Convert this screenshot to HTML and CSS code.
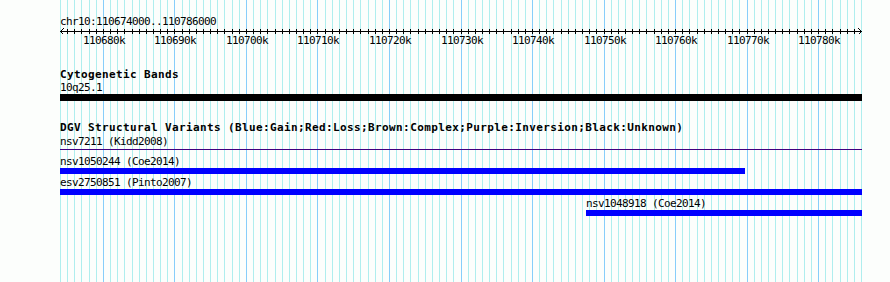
FILE: index.html
```html
<!DOCTYPE html>
<html lang="en">
  <head>
    <meta charset="UTF-8" />
    <meta name="viewport" content="width=device-width, initial-scale=1.0" />
    <title>chr10:110674000..110786000</title>
    <link rel="stylesheet" href="styles.css">
  </head>
  <body>
    <div class="panel">
      <svg class="grid" id="grid" width="890" height="282"></svg>

      <div class="ruler">
        <div class="ruler-title">chr10:110674000..110786000</div>
        <svg class="axis" id="axis" width="890" height="18"></svg>
      </div>

      <div class="track cyto-track">
        <div class="track-title">Cytogenetic Bands</div>
        <div class="lane" id="cytoLane"></div>
      </div>

      <div class="track dgv-track">
        <div class="track-title">DGV Structural Variants (Blue:Gain;Red:Loss;Brown:Complex;Purple:Inversion;Black:Unknown)</div>
        <div class="lane" id="dgvLane"></div>
      </div>
    </div>

    <script>
      const START = 110674000;
      const END = 110786000;
      const LEFT = 60;
      const SPAN = 801;
      const SVG_NS = "http://www.w3.org/2000/svg";

      const bands = [{ name: "10q25.1", start: 110600000, end: 110900000, type: "band" }];

      const variants = [
        { name: "nsv7211 (Kidd2008)", start: 110600000, end: 110900000, type: "inversion" },
        { name: "nsv1050244 (Coe2014)", start: 110650000, end: 110769650, type: "gain" },
        { name: "esv2750851 (Pinto2007)", start: 110660000, end: 110800000, type: "gain" },
        { name: "nsv1048918 (Coe2014)", start: 110747560, end: 110820000, type: "gain" },
      ];

      function toX(bp) {
        return LEFT + ((bp - START) * SPAN) / (END - START);
      }

      function svgEl(tag, attrs) {
        const el = document.createElementNS(SVG_NS, tag);
        for (const key in attrs) el.setAttribute(key, attrs[key]);
        return el;
      }

      function drawGrid() {
        const grid = document.getElementById("grid");
        const axis = document.getElementById("axis");
        for (let kb = START / 1000; kb <= END / 1000; kb++) {
          const x = Math.round(toX(kb * 1000)) + 0.5;
          const major = kb % 10 === 0;
          grid.appendChild(
            svgEl("line", { x1: x, x2: x, y1: 0, y2: 282, class: major ? "grid-major" : "grid-minor" })
          );
          if (kb > START / 1000 && kb < END / 1000) {
            axis.appendChild(svgEl("line", { x1: x, x2: x, y1: 1, y2: 6, class: "tick" }));
          }
          if (major) {
            const label = svgEl("text", { x: x + 0.5, y: 16, class: "tick-label" });
            label.textContent = kb + "k";
            axis.appendChild(label);
          }
        }
        const x1 = LEFT + 0.5;
        const x2 = Math.round(toX(END)) + 0.5;
        axis.appendChild(svgEl("line", { x1: x1, x2: x2, y1: 3.5, y2: 3.5, class: "tick" }));
        axis.appendChild(svgEl("polyline", { points: `${x1 + 3},0.5 ${x1},3.5 ${x1 + 3},6.5`, class: "arrow" }));
        axis.appendChild(svgEl("polyline", { points: `${x2 - 3},0.5 ${x2},3.5 ${x2 - 3},6.5`, class: "arrow" }));
      }

      function renderLane(laneId, features) {
        const lane = document.getElementById(laneId);
        features.forEach((f) => {
          const x1 = Math.round(toX(Math.max(f.start, START)));
          const x2 = Math.round(toX(Math.min(f.end, END)));
          const item = document.createElement("div");
          item.className = "feature " + f.type;
          item.style.marginLeft = x1 + "px";
          item.style.width = x2 - x1 + 1 + "px";

          const label = document.createElement("div");
          label.className = "label";
          label.textContent = f.name;

          const glyph = document.createElement("div");
          glyph.className = "glyph";

          item.appendChild(label);
          item.appendChild(glyph);
          lane.appendChild(item);
        });
      }

      drawGrid();
      renderLane("cytoLane", bands);
      renderLane("dgvLane", variants);
    </script>
  </body>
</html>
```

FILE: styles.css
```css
* {
  box-sizing: border-box;
  margin: 0;
  padding: 0;
}

body {
  background: #fcfefc;
  color: #000;
  font-family: "DejaVu Sans Mono", "Liberation Mono", monospace;
  font-size: 11px;
  letter-spacing: -0.62px;
}

.panel {
  position: relative;
  width: 890px;
  height: 282px;
  overflow: hidden;
}

.grid {
  position: absolute;
  top: 0;
  left: 0;
}

.grid-minor {
  stroke: #afeeee;
  stroke-width: 1;
}

.grid-major {
  stroke: #87cefa;
  stroke-width: 1;
}

.ruler,
.track {
  position: relative;
}

.ruler {
  padding-top: 15px;
}

.ruler-title {
  padding-left: 60px;
  line-height: 13px;
  white-space: nowrap;
}

.axis {
  display: block;
}

.tick,
.arrow {
  stroke: #000;
  stroke-width: 1;
  fill: none;
  shape-rendering: crispEdges;
}

.tick-label {
  font-family: "DejaVu Sans Mono", "Liberation Mono", monospace;
  font-size: 11px;
  letter-spacing: -0.62px;
  text-anchor: middle;
  fill: #000;
}

.track-title {
  padding-left: 60px;
  font-weight: bold;
  letter-spacing: 0.38px;
  line-height: 12px;
  white-space: nowrap;
}

.cyto-track {
  margin-top: 23px;
}

.dgv-track {
  margin-top: 21px;
}

.feature .label {
  line-height: 13px;
  white-space: nowrap;
}

.band .glyph {
  height: 7px;
  background: #000;
}

.inversion {
  margin-top: 1px;
  margin-bottom: 6px;
}

.inversion .glyph {
  height: 1px;
  margin-top: 1px;
  background: #400080;
}

.gain {
  margin-top: 3px;
}

.gain .label {
  line-height: 12px;
}

.gain .glyph {
  height: 6px;
  background: #0000ff;
}
```
